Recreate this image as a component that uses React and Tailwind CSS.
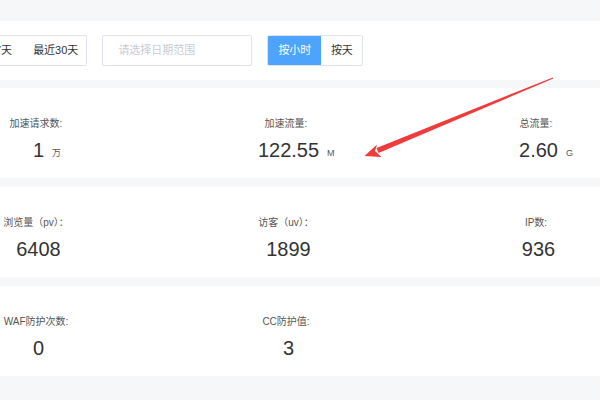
import React from 'react';

const font = { fontFamily: '"Liberation Sans", Arial, "Noto Sans CJK SC", sans-serif' };

const rows = [
  [
    { label: '加速请求数:', value: '1', unit: '万' },
    { label: '加速流量:', value: '122.55', unit: 'M' },
    { label: '总流量:', value: '2.60', unit: 'G' },
  ],
  [
    { label: '浏览量（pv）：', value: '6408' },
    { label: '访客（uv）：', value: '1899' },
    { label: 'IP数:', value: '936' },
  ],
  [
    { label: 'WAF防护次数:', value: '0' },
    { label: 'CC防护值:', value: '3' },
  ],
];

const Stat = ({ label, value, unit }) => (
  <div className="flex flex-col items-center">
    <div className="text-[10px] leading-[14px] text-[#555]">{label}</div>
    <div className="mt-[9px] pl-[5px]">
      <span className="relative inline-block text-[20px] leading-none text-[#333]">
        {value}
        {unit && (
          <span className="absolute left-full bottom-[2px] ml-[8px] text-[9px] leading-none text-[#555]">
            {unit}
          </span>
        )}
      </span>
    </div>
  </div>
);

export default function App() {
  return (
    <div className="relative w-[600px] h-[400px] overflow-hidden bg-[#f6f7f9]" style={font}>
      {/* toolbar */}
      <div className="mt-[21px] h-[59px] bg-white pt-[14px] flex">
        <div className="ml-[-39px] flex h-[31px] border border-[#dfe3ea] rounded-[2px] text-[11px] text-[#333]">
          <div className="px-[11px] flex items-center">最近7天</div>
          <div className="pl-[10px] pr-[8px] flex items-center">最近30天</div>
        </div>
        <div className="ml-[15px] w-[150px] h-[31px] border border-[#dfe3ea] rounded-[2px] flex items-center pl-[15px] text-[11px] text-[#c8ccd4]">
          请选择日期范围
        </div>
        <div className="ml-[15px] flex h-[31px] border border-[#dfe3ea] rounded-[2px] text-[11px] overflow-hidden">
          <div className="w-[53px] bg-[#4ea4fc] text-white flex items-center justify-center">按小时</div>
          <div className="w-[41px] text-[#333] flex items-center justify-center">按天</div>
        </div>
      </div>

      {/* stat cards */}
      <div className="mt-[8px] flex flex-col gap-[9px]">
        {rows.map((row, i) => (
          <div key={i} className="h-[90px] bg-white pt-[29px]">
            <div className="ml-[-89px] w-[750px] grid grid-cols-3">
              {row.map((s) => (
                <Stat key={s.label} {...s} />
              ))}
            </div>
          </div>
        ))}
      </div>

      {/* annotation arrow */}
      <svg className="absolute left-0 top-0 pointer-events-none" width="600" height="400">
        <polygon points="552.8,77.4 553.3,78.4 378.5,153 376.5,148" fill="#ef3b3b" />
        <polygon points="364.5,156 377,144.5 375,151 381.5,157" fill="#ef3b3b" />
      </svg>
    </div>
  );
}
